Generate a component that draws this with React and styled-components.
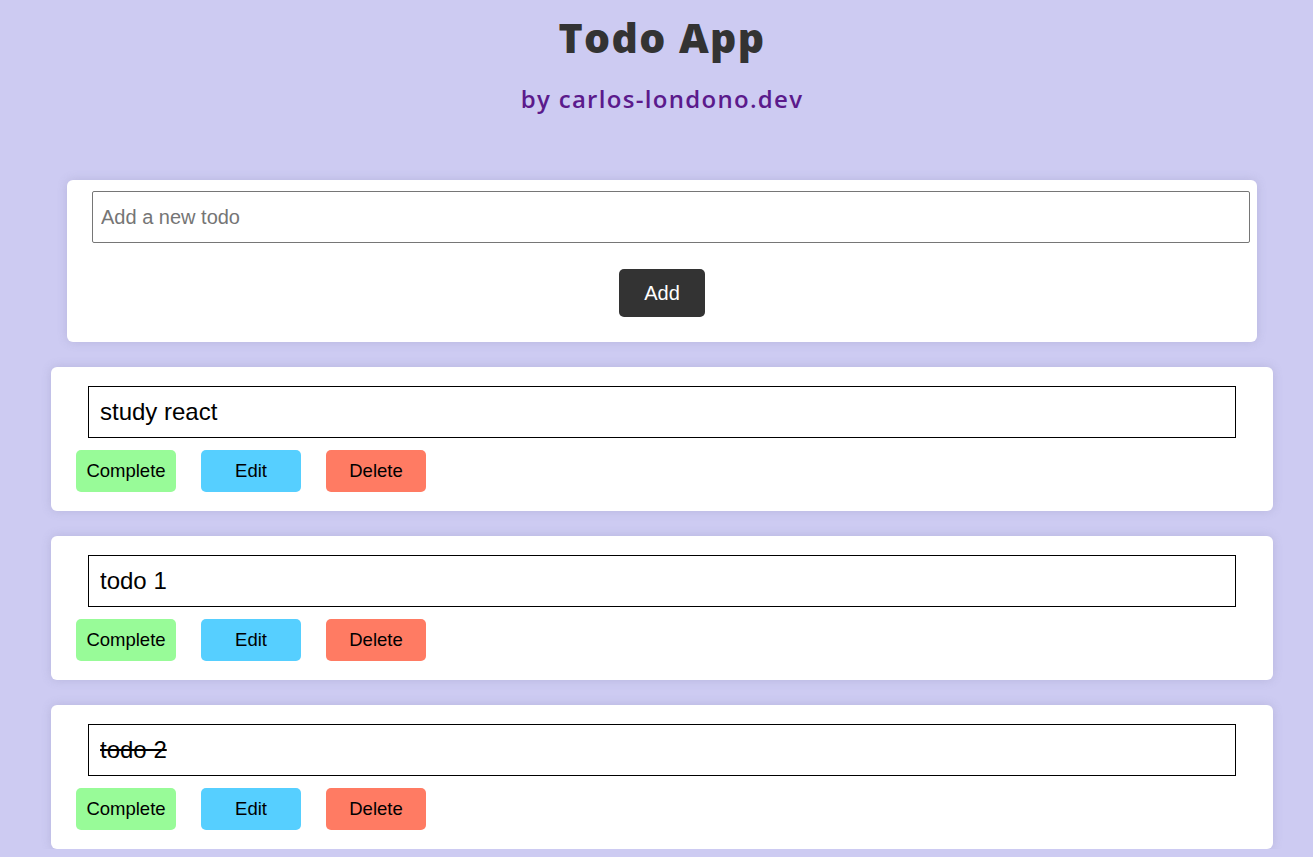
import React from "react";
import styled, { createGlobalStyle } from "styled-components";

const Global = createGlobalStyle`
  html, body { margin: 0; padding: 0; }
  body {
    background: #cdcbf2;
    font-family: "Liberation Sans", Arial, sans-serif;
  }
  * { box-sizing: border-box; }
`;

const Page = styled.div`
  display: flex;
  flex-direction: column;
  align-items: center;
  padding: 13px 0 0 11px;
`;

const Title = styled.h1`
  margin: 0;
  font-family: "Open Sans", sans-serif;
  font-weight: 800;
  font-size: 41px;
  line-height: 48px;
  color: #333333;
  letter-spacing: 1.4px;
`;

const Subtitle = styled.h2`
  margin: 22px 0 0;
  font-family: "Open Sans", sans-serif;
  font-weight: 600;
  font-size: 24px;
  line-height: 32px;
  color: #5b1a8c;
  letter-spacing: 1.3px;
`;

const FormCard = styled.form`
  margin-top: 65px;
  width: 1190px;
  background: #fff;
  border-radius: 6px;
  box-shadow: 0 0 10px rgba(120, 120, 160, 0.25);
  padding: 11px 7px 25px 25px;
  display: flex;
  flex-direction: column;
  align-items: center;
`;

const NewInput = styled.input`
  width: 100%;
  height: 52px;
  border: 1px solid #767676;
  border-radius: 2px;
  padding: 0 8px;
  font-family: "Liberation Sans", Arial, sans-serif;
  font-size: 20px;
  color: #333;
  outline: none;
  &::placeholder { color: #757575; }
`;

const AddButton = styled.button`
  margin-top: 26px;
  margin-right: 18px;
  width: 86px;
  height: 48px;
  border: none;
  border-radius: 5px;
  background: #333333;
  color: #fff;
  font-family: "Liberation Sans", Arial, sans-serif;
  font-size: 20px;
`;

const List = styled.div`
  margin-top: 25px;
  display: flex;
  flex-direction: column;
  gap: 25px;
  width: 1222px;
`;

const TodoCard = styled.div`
  background: #fff;
  border-radius: 6px;
  box-shadow: 0 0 10px rgba(120, 120, 160, 0.25);
  padding: 19px 25px 19px;
  display: flex;
  flex-direction: column;
  gap: 12px;
`;

const TodoInput = styled.input`
  margin: 0 12px;
  height: 52px;
  border: 1px solid #000;
  border-radius: 0;
  padding: 0 11px;
  font-family: "Liberation Sans", Arial, sans-serif;
  font-size: 24px;
  color: #000;
  background: #fff;
  outline: none;
  text-decoration: ${(p) => (p.$done ? "line-through" : "none")};
`;

const Actions = styled.div`
  display: flex;
  gap: 25px;
`;

const ActionButton = styled.button`
  width: 100px;
  height: 42px;
  border: none;
  border-radius: 5px;
  background: ${(p) => p.$bg};
  color: #000;
  font-family: "Liberation Sans", Arial, sans-serif;
  font-size: 18.5px;
  padding: 0;
`;

const todos = [
  { text: "study react", done: false },
  { text: "todo 1", done: false },
  { text: "todo 2", done: true },
];

export default function App() {
  return (
    <>
      <Global />
      <Page>
        <Title>Todo App</Title>
        <Subtitle>by carlos-londono.dev</Subtitle>
        <FormCard onSubmit={(e) => e.preventDefault()}>
          <NewInput placeholder="Add a new todo" />
          <AddButton type="submit">Add</AddButton>
        </FormCard>
        <List>
          {todos.map((t) => (
            <TodoCard key={t.text}>
              <TodoInput $done={t.done} defaultValue={t.text} readOnly />
              <Actions>
                <ActionButton $bg="#98fb98">Complete</ActionButton>
                <ActionButton $bg="#56cfff">Edit</ActionButton>
                <ActionButton $bg="#ff7b63">Delete</ActionButton>
              </Actions>
            </TodoCard>
          ))}
        </List>
      </Page>
    </>
  );
}
